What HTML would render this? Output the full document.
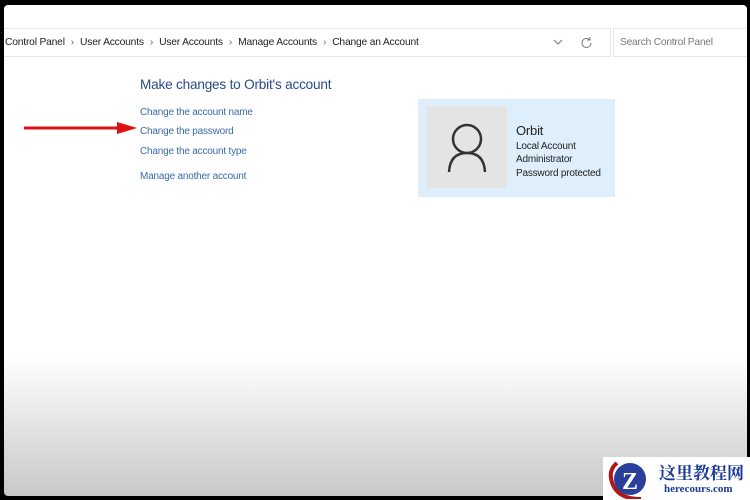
<!DOCTYPE html>
<html><head><meta charset="utf-8"><style>
*{margin:0;padding:0;box-sizing:border-box}
body{width:750px;height:500px;background:#000;position:relative;overflow:hidden;font-family:"Liberation Sans",sans-serif}
#scr{position:absolute;left:4px;top:5px;width:743px;height:491px;border-radius:4px;overflow:hidden;
background:linear-gradient(#fff 0,#fff 350px,#f2f2f2 385px,#dcdcdc 440px,#c8c8c8 491px)}
.bar{position:absolute;left:-4px;top:23px;width:611px;height:29px;border:1px solid #e6e6e6;border-left:none;background:#fff;font-size:10.3px;color:#222;line-height:27px;padding-left:5px;letter-spacing:-0.2px}
.bar span{color:#666;margin:0 6px}
.search{position:absolute;left:609px;top:23px;width:140px;height:29px;border:1px solid #e6e6e6;background:#fff;font-size:10.2px;color:#777;line-height:27px;padding-left:6px;letter-spacing:-0.2px}
a{position:absolute;color:#3a6aa8;font-size:10px;text-decoration:none;letter-spacing:-0.2px}
h1{position:absolute;left:136px;top:72px;font-weight:normal;font-size:13.6px;color:#2a4a8a;letter-spacing:-0.2px}
.card{position:absolute;left:414px;top:94px;width:197px;height:98px;background:#dfeefb}
.av{position:absolute;left:9px;top:7px;width:80px;height:82px;background:#e4e4e4}
.info{position:absolute;left:98px;top:25px;font-size:10px;color:#222;line-height:13.5px;letter-spacing:-0.2px}
.info b{font-weight:normal;font-size:13px;display:block;margin-bottom:2px}
.logo{position:absolute;left:603px;top:457px;width:147px;height:43px;background:#fff}
</style></head><body>
<div id="scr">
<div class="bar">Control Panel<span>›</span>User Accounts<span>›</span>User Accounts<span>›</span>Manage Accounts<span>›</span>Change an Account
<svg style="position:absolute;left:553px;top:10px" width="10" height="7"><path d="M1 1l4 4 4-4" stroke="#777" fill="none"/></svg>
<svg style="position:absolute;left:580px;top:7px" width="14" height="14"><path d="M11 7a4.5 4.5 0 1 1-1.5-3.4M10 1v3h-3" stroke="#777" fill="none"/></svg>
</div>
<div class="search">Search Control Panel</div>
<h1>Make changes to Orbit's account</h1>
<a style="left:136px;top:102px">Change the account name</a>
<a style="left:136px;top:121px">Change the password</a>
<a style="left:136px;top:141px">Change the account type</a>
<a style="left:136px;top:166px">Manage another account</a>
<svg style="position:absolute;left:20px;top:117px" width="116" height="12"><path d="M0 6h96" stroke="#e01010" stroke-width="3"/><path d="M93 0l20 6-20 6z" fill="#e01010"/></svg>
<div class="card"><div class="av"><svg width="80" height="82"><circle cx="40" cy="33" r="14" stroke="#333" stroke-width="2.5" fill="none"/><path d="M22 66q1-19 18-19t18 19" stroke="#333" stroke-width="2.5" fill="none"/></svg></div>
<div class="info"><b>Orbit</b>Local Account<br>Administrator<br>Password protected</div></div>
</div>
<div class="logo">
<svg style="position:absolute;left:2px;top:2px" width="50" height="40"><path d="M12 4q-10 8-4 22t28 14" stroke="#b01818" stroke-width="4" fill="none"/><circle cx="25" cy="20" r="16" fill="#2a3f9a"/><text x="17" y="30" font-size="24" font-weight="bold" fill="#fff" font-family="Liberation Serif">Z</text></svg>
<div style="position:absolute;left:56px;top:2px;font-family:'Liberation Serif','Noto Serif CJK SC',serif;font-weight:bold;font-size:17px;color:#1a3a9a">这里教程网</div>
<div style="position:absolute;left:61px;top:26px;font-family:'Liberation Serif',serif;font-weight:bold;font-size:11px;color:#1a3a9a">herecours.com</div>
</div>
</body></html>
